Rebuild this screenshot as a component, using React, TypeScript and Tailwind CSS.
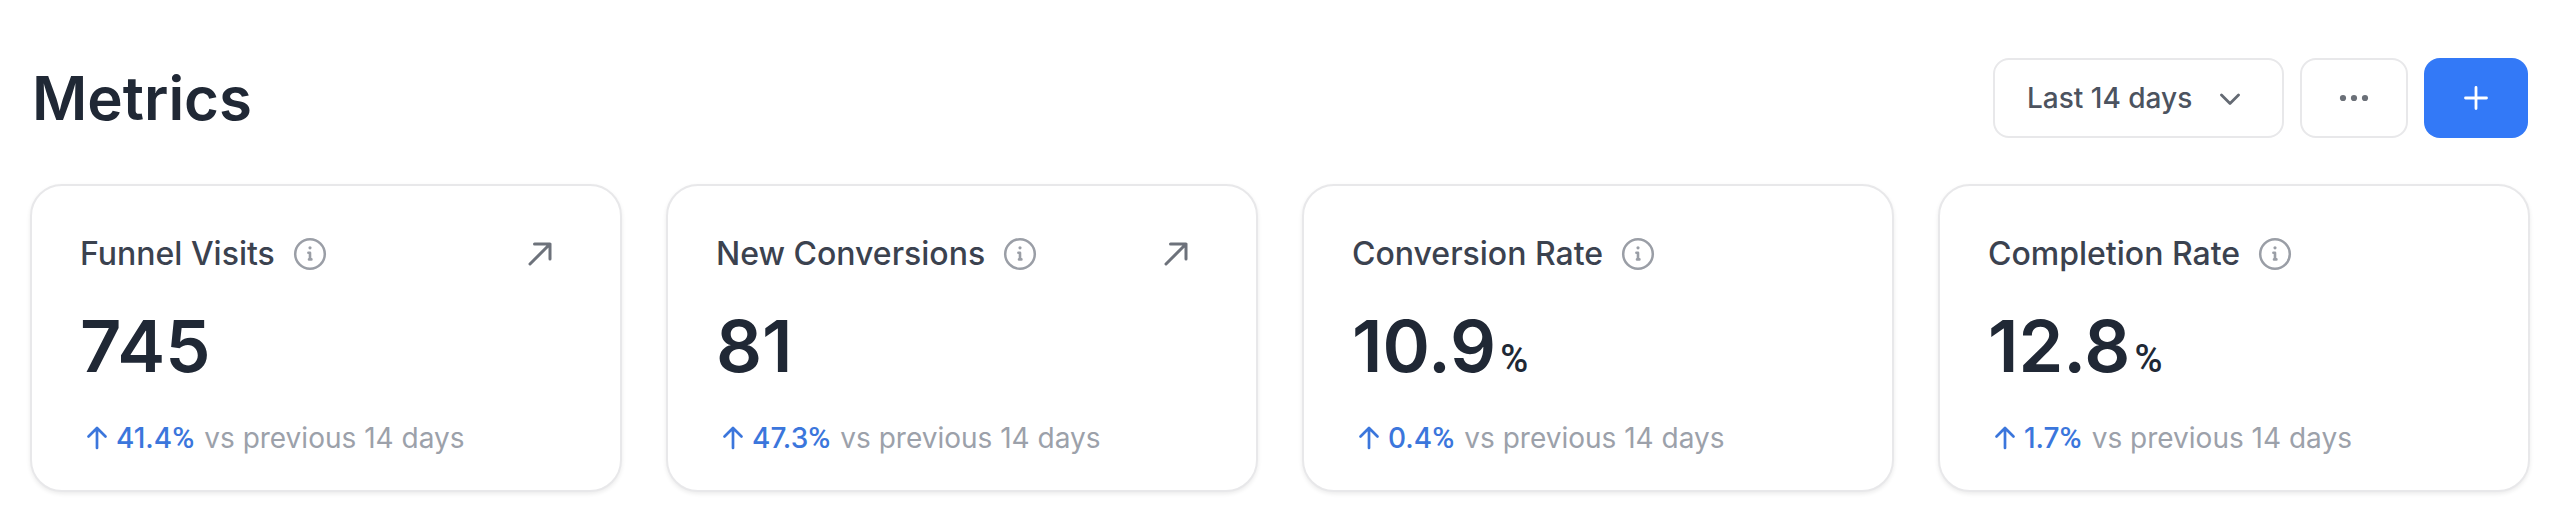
interface Metric {
  label: string;
  value: string;
  unit?: string;
  change: string;
  href?: string;
}

const METRICS: Metric[] = [
  { label: "Funnel Visits", value: "745", change: "41.4", href: "#funnel-visits" },
  { label: "New Conversions", value: "81", change: "47.3", href: "#new-conversions" },
  { label: "Conversion Rate", value: "10.9", unit: "%", change: "0.4" },
  { label: "Completion Rate", value: "12.8", unit: "%", change: "1.7" },
];

function InfoIcon() {
  return (
    <svg viewBox="0 0 34 34" className="size-[34px]" fill="none" stroke="currentColor" strokeLinecap="round" strokeLinejoin="round" aria-hidden="true">
      <circle cx="17" cy="17" r="14.8" strokeWidth="2.5" />
      <path d="M15.4 15.8h1.6v6.4M16 22.4h2.4" strokeWidth="2.6" />
      <circle cx="17" cy="10.8" r="1.6" fill="currentColor" stroke="none" />
    </svg>
  );
}

function ArrowUpRightIcon() {
  return (
    <svg viewBox="0 0 24 24" className="size-6" fill="none" stroke="currentColor" strokeWidth="3" strokeLinecap="round" strokeLinejoin="round" aria-hidden="true">
      <path d="M2 22 22 2M6.5 2H22v15" />
    </svg>
  );
}

function ArrowUpIcon() {
  return (
    <svg viewBox="0 0 22 24" className="h-6 w-[22px]" fill="none" stroke="currentColor" strokeWidth="2.7" strokeLinecap="round" strokeLinejoin="round" aria-hidden="true">
      <path d="M11 22V2M2.5 10.5 11 2l8.5 8.5" />
    </svg>
  );
}

function ChevronDownIcon() {
  return (
    <svg viewBox="0 0 22 14" className="pointer-events-none absolute top-1/2 right-[43px] h-3.5 w-[22px] -translate-y-1/2" fill="none" stroke="currentColor" strokeWidth="2.8" strokeLinecap="round" strokeLinejoin="round" aria-hidden="true">
      <path d="m2.5 4 8.5 8.5L19.5 4" />
    </svg>
  );
}

function MetricCard({ metric }: { metric: Metric }) {
  return (
    <article className="rounded-[32px] border-2 border-[#e8e8ea] bg-white px-12 pt-12 pb-8 shadow-[0_2px_4px_rgba(0,0,0,0.08)]">
      <div className="flex h-10 items-center">
        <h2 className="text-[32px] leading-10 font-medium text-[#3b424f]">{metric.label}</h2>
        <button type="button" aria-label={`About ${metric.label}`} className="ml-[18px] text-[#9a9ea6]">
          <InfoIcon />
        </button>
        {metric.href && (
          <a href={metric.href} aria-label={`Open ${metric.label}`} className="mr-5 ml-auto text-[#6d727b]">
            <ArrowUpRightIcon />
          </a>
        )}
      </div>
      <p className="mt-8 flex h-20 items-baseline text-[72px] leading-[80px] font-semibold text-[#202835]">
        {metric.value}
        {metric.unit && <span className="ml-1 font-['Roboto',sans-serif] text-[38px] leading-10 font-medium">{metric.unit}</span>}
      </p>
      <p className="mt-8 flex items-center text-[28px] leading-10 text-[#9ca1aa]">
        <span className="mr-2.5 ml-1.5 flex items-center gap-2 font-medium text-[#3b76dc]">
          <ArrowUpIcon />
          <span>
            {metric.change}
            <span className="font-['Roboto',sans-serif] text-[30px] leading-8">%</span>
          </span>
        </span>
        vs previous 14 days
      </p>
    </article>
  );
}

export default function App() {
  return (
    <main className="bg-white pt-[58px] pr-[34px] pb-[30px] pl-[30px] font-['Inter',sans-serif]">
      <header className="flex items-center justify-between px-0.5">
        <h1 className="text-[60px] leading-[80px] font-semibold text-[#202835]">Metrics</h1>
        <div className="flex gap-4">
          <div className="relative text-[#646a73]">
            <select
              aria-label="Date range"
              className="h-20 w-[291px] appearance-none rounded-2xl border-2 border-[#e8e8ea] bg-white pl-8 text-[28px] font-medium text-[#4c535f]"
            >
              <option>Last 14 days</option>
              <option>Last 30 days</option>
            </select>
            <ChevronDownIcon />
          </div>
          <button type="button" aria-label="More options" className="flex h-20 w-[108px] items-center justify-center rounded-2xl border-2 border-[#e8e8ea] bg-white text-[#6b7078]">
            <svg viewBox="0 0 30 8" className="h-2 w-[30px]" fill="currentColor" aria-hidden="true">
              <circle cx="4" cy="4" r="3.1" />
              <circle cx="15" cy="4" r="3.1" />
              <circle cx="26" cy="4" r="3.1" />
            </svg>
          </button>
          <button type="button" aria-label="Add metric" className="flex h-20 w-[104px] items-center justify-center rounded-2xl bg-[#3379f7] text-white">
            <svg viewBox="0 0 24 24" className="size-6" fill="none" stroke="currentColor" strokeWidth="2.8" strokeLinecap="round" aria-hidden="true">
              <path d="M12 1.5v21M1.5 12h21" />
            </svg>
          </button>
        </div>
      </header>
      <section className="mt-[46px] grid grid-cols-4 gap-11">
        {METRICS.map((metric) => (
          <MetricCard key={metric.label} metric={metric} />
        ))}
      </section>
    </main>
  );
}
